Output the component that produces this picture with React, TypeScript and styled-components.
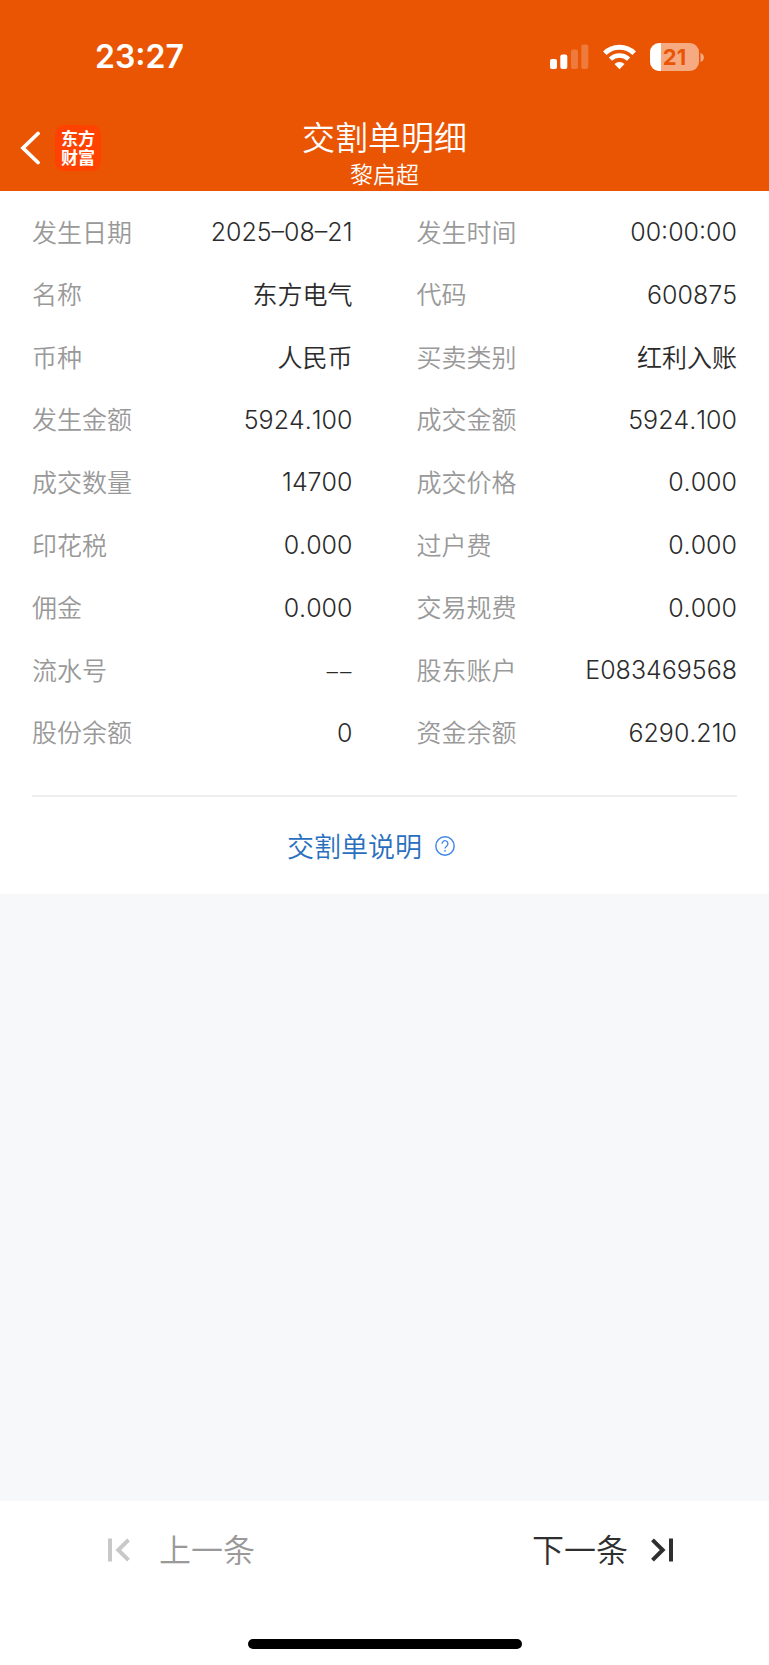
import React from "react";
import styled, { createGlobalStyle } from "styled-components";

const GlobalStyle = createGlobalStyle`
  * { box-sizing: border-box; }
  body {
    margin: 0;
    background: #fff;
    font-family: "Noto Sans CJK SC", sans-serif;
    font-weight: 350;
    color: #2b2b2b;
  }
`;

const BRAND = "#ea5504";

const Page = styled.div`
  min-height: 100vh;
  display: flex;
  flex-direction: column;
  background: #f7f8fa;
`;

const Header = styled.header`
  background: ${BRAND};
  color: #fff;
`;

const StatusBar = styled.div`
  height: 114px;
  padding: 0 65px 0 95px;
  display: flex;
  align-items: center;
  justify-content: space-between;
`;

const Clock = styled.time`
  font-family: Inter, sans-serif;
  font-weight: 600;
  font-size: 32px;
  line-height: 40px;
`;

const StatusIcons = styled.div`
  display: flex;
  align-items: center;
  gap: 14px;
`;

const Battery = styled.div`
  display: flex;
  align-items: center;
  gap: 1px;
`;

const BatteryBody = styled.div`
  width: 49px;
  height: 28px;
  border-radius: 9px;
  background: linear-gradient(to right, #fff 11px, #f5aa82 11px);
  color: ${BRAND};
  font-family: Inter, sans-serif;
  font-weight: 700;
  font-size: 22px;
  line-height: 28px;
  text-align: center;
`;

const NavBar = styled.nav`
  display: grid;
  grid-template-columns: 1fr auto 1fr;
  height: 77px;
`;

const NavStart = styled.div`
  height: 68px;
  padding-left: 20px;
  display: flex;
  align-items: center;
  gap: 14px;
`;

const IconButton = styled.button`
  border: 0;
  padding: 0;
  background: none;
  color: inherit;
  display: flex;
  cursor: pointer;
`;

const Logo = styled.div`
  width: 46px;
  height: 46px;
  border-radius: 9px;
  background: #ff4200;
  padding-top: 3px;
  font-weight: 700;
  font-size: 17px;
  line-height: 19px;
  text-align: center;
`;

const TitleBlock = styled.div`
  text-align: center;
`;

const Title = styled.h1`
  margin: 0;
  font-size: 33px;
  font-weight: 350;
  line-height: 45px;
`;

const Subtitle = styled.p`
  margin: 0;
  font-size: 23px;
  font-weight: 350;
  line-height: 29px;
`;

const Card = styled.main`
  background: #fff;
`;

const Details = styled.dl`
  margin: 0;
  padding: 10px 0 31px;
  min-height: 604px;
  display: grid;
  grid-template-columns: 1fr 1fr;
  grid-auto-rows: 1fr;
`;

const Field = styled.div`
  padding: 0 32px;
  display: flex;
  align-items: center;
  justify-content: space-between;
`;

const Label = styled.dt`
  font-size: 25px;
  line-height: 36px;
  padding-bottom: 3px;
  color: #999;
`;

type ValueKind = "text" | "number" | "empty";

const valueFonts: Record<ValueKind, string> = {
  text: "inherit",
  number: "Inter, sans-serif",
  empty: '"Noto Sans", sans-serif',
};

const Value = styled.dd<{ $kind: ValueKind }>`
  margin: 0;
  padding-bottom: ${(p) => (p.$kind === "text" ? 3 : 0)}px;
  font-family: ${(p) => valueFonts[p.$kind]};
  font-size: ${(p) => (p.$kind === "empty" ? 27 : 25)}px;
  font-weight: ${(p) => (p.$kind === "text" ? 350 : 300)};
  font-kerning: none;
  line-height: 36px;
`;

const HelpRow = styled.div`
  margin: 0 32px;
  border-top: 2px solid #eee;
  padding-right: 27px;
  height: 99px;
  display: flex;
  align-items: center;
  justify-content: center;
`;

const HelpLink = styled.a`
  display: flex;
  align-items: center;
  gap: 13px;
  color: #2a6fbe;
  font-size: 27px;
  line-height: 40px;
  text-decoration: none;
`;

const Footer = styled.footer`
  margin-top: auto;
  background: #fff;
  padding-bottom: 16px;
`;

const Pager = styled.div`
  height: 98px;
  padding: 0 96px 0 108px;
  display: flex;
  align-items: center;
  justify-content: space-between;
`;

const PagerButton = styled.button<{ $gap: number }>`
  border: 0;
  padding: 0;
  background: none;
  display: flex;
  align-items: center;
  gap: ${(p) => p.$gap}px;
  font: inherit;
  font-size: 32px;
  line-height: 48px;
  color: #2f2f2f;
  cursor: pointer;
  &:disabled {
    color: #999;
    cursor: default;
  }
`;

const PagerText = styled.span`
  padding-bottom: 4px;
`;

const HomeIndicator = styled.div`
  width: 274px;
  height: 10px;
  margin: 40px auto 0;
  border-radius: 5px;
  background: #000;
`;

const fields: [string, string][] = [
  ["发生日期", "2025–08–21"],
  ["发生时间", "00:00:00"],
  ["名称", "东方电气"],
  ["代码", "600875"],
  ["币种", "人民币"],
  ["买卖类别", "红利入账"],
  ["发生金额", "5924.100"],
  ["成交金额", "5924.100"],
  ["成交数量", "14700"],
  ["成交价格", "0.000"],
  ["印花税", "0.000"],
  ["过户费", "0.000"],
  ["佣金", "0.000"],
  ["交易规费", "0.000"],
  ["流水号", "––"],
  ["股东账户", "E083469568"],
  ["股份余额", "0"],
  ["资金余额", "6290.210"],
];

const kindOf = (value: string): ValueKind => {
  if (value === "––") return "empty";
  return /\d/.test(value) ? "number" : "text";
};

const SignalIcon = () => (
  <svg width="39" height="26" viewBox="0 0 39 26" fill="#fff" aria-hidden="true">
    <rect x="0" y="15" width="7" height="10" rx="2" />
    <rect x="10.300" y="10.500" width="7" height="14.500" rx="2" />
    <rect x="21" y="5.500" width="7" height="19.500" rx="2" opacity=".22" />
    <rect x="31.300" y="0.500" width="7" height="24.500" rx="2" opacity=".22" />
  </svg>
);

const WifiIcon = () => (
  <svg width="33" height="26" viewBox="0 0 33 26" fill="none" stroke="#fff" aria-hidden="true">
    <path d="M1.800 9.200a21 21 0 0 1 29.400 0" strokeWidth="5" />
    <path d="M7.400 15.200a13 13 0 0 1 18.200 0" strokeWidth="4.600" />
    <path d="M16.500 25.200l-5-5.100a7.200 7.200 0 0 1 10 0z" fill="#fff" stroke="none" />
  </svg>
);

const BatteryTip = () => (
  <svg width="4" height="9" viewBox="0 0 4 9" aria-hidden="true">
    <path d="M0.500 0c4.500 1.500 4.500 7.500 0 9z" fill="#f5aa82" />
  </svg>
);

const BackIcon = () => (
  <svg width="21" height="34" viewBox="0 0 21 34" fill="none" aria-hidden="true">
    <path d="M18 2.500L3 17l15 14.500" stroke="#fff" strokeWidth="3.800" strokeLinecap="round" />
  </svg>
);

const HelpIcon = () => (
  <svg width="20" height="20" viewBox="0 0 20 20" fill="none" stroke="#3b86e8" aria-hidden="true">
    <circle cx="10" cy="10" r="9.200" strokeWidth="1.400" />
    <path d="M7.100 7.700a2.900 2.900 0 1 1 4.700 2.200c-1.200 1-1.800 1.500-1.800 2.700" strokeWidth="1.300" />
    <circle cx="10" cy="14.800" r=".9" fill="#3b86e8" stroke="none" />
  </svg>
);

const FirstIcon = () => (
  <svg width="22" height="24" viewBox="0 0 22 24" fill="none" stroke="#c8c8c8" strokeWidth="4" aria-hidden="true">
    <path d="M2 .5v23M20.500 1.800L10.300 12l10.200 10.200" />
  </svg>
);

const LastIcon = () => (
  <svg width="22" height="24" viewBox="0 0 22 24" fill="none" stroke="#2f2f2f" strokeWidth="4" aria-hidden="true">
    <path d="M20 .5v23M1.500 1.800L11.700 12L1.500 22.200" />
  </svg>
);

export default function App() {
  return (
    <Page>
      <GlobalStyle />
      <Header>
        <StatusBar>
          <Clock>23:27</Clock>
          <StatusIcons>
            <SignalIcon />
            <WifiIcon />
            <Battery>
              <BatteryBody>21</BatteryBody>
              <BatteryTip />
            </Battery>
          </StatusIcons>
        </StatusBar>
        <NavBar>
          <NavStart>
            <IconButton type="button" aria-label="返回">
              <BackIcon />
            </IconButton>
            <Logo>
              东方
              <br />
              财富
            </Logo>
          </NavStart>
          <TitleBlock>
            <Title>交割单明细</Title>
            <Subtitle>黎启超</Subtitle>
          </TitleBlock>
        </NavBar>
      </Header>
      <Card>
        <Details>
          {fields.map(([label, value]) => (
            <Field key={label}>
              <Label>{label}</Label>
              <Value $kind={kindOf(value)}>{value}</Value>
            </Field>
          ))}
        </Details>
        <HelpRow>
          <HelpLink href="#help">
            交割单说明
            <HelpIcon />
          </HelpLink>
        </HelpRow>
      </Card>
      <Footer>
        <Pager>
          <PagerButton type="button" disabled $gap={29}>
            <FirstIcon />
            <PagerText>上一条</PagerText>
          </PagerButton>
          <PagerButton type="button" $gap={23}>
            <PagerText>下一条</PagerText>
            <LastIcon />
          </PagerButton>
        </Pager>
        <HomeIndicator />
      </Footer>
    </Page>
  );
}
